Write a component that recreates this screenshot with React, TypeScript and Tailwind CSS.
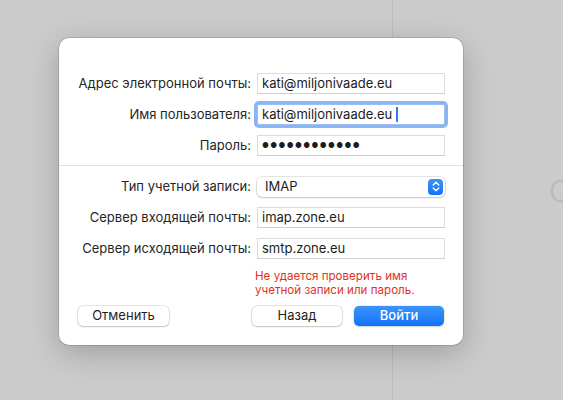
import React from "react";

const font = { fontFamily: "Inter, 'Noto Sans', Roboto, sans-serif" };

function Field({ label, value, focused = false, password = false }: { label: string; value: string; focused?: boolean; password?: boolean }) {
  return (
    <div className="flex h-[21px] items-center">
      <div className="w-[190px] shrink-0 text-right text-[13px] text-[#262626]">{label}</div>
      <div
        className={
          focused
            ? "ml-[6px] flex h-[21px] w-[188px] items-center rounded-[2px] border border-[#9cbff2] bg-white pl-[4px] ring-[3px] ring-[#8ab5f4]"
            : "ml-[6px] flex h-[21px] w-[188px] items-center border border-[#dcdcdc] border-b-[#cfcfcf] bg-white pl-[4px]"
        }
      >
        <span className={password ? "text-[7.5px] tracking-[1.4px] text-[#1c1c1c]" : "text-[13px] text-[#1c1c1c]"}>{value}</span>
        {focused && <span className="ml-[4px] h-[15px] w-[2px] bg-[#2f7cf6]" />}
      </div>
    </div>
  );
}

export default function App() {
  return (
    <div className="relative h-[400px] w-[563px] overflow-hidden bg-[#cbcbcb] pl-[59px] pt-[38px]" style={font}>
      <div className="absolute left-[392px] top-0 h-full w-px bg-[#bcbcbc]" />
      <div className="absolute left-[549px] top-[176px] text-[30px] font-light leading-none text-[#b9b9b9]">C</div>

      <div className="relative flex h-[307px] w-[404px] flex-col rounded-[10px] bg-white pt-[35px] shadow-[0_0_0_0.5px_rgba(0,0,0,0.25),0_8px_30px_rgba(0,0,0,0.22)]">
        <div className="flex flex-col gap-[10px] pl-[2px]">
          <Field label="Адрес электронной почты:" value="kati@miljonivaade.eu" />
          <Field label="Имя пользователя:" value="kati@miljonivaade.eu" focused />
          <Field label="Пароль:" value="●●●●●●●●●●●●" password />
        </div>

        <div className="mt-[9px] h-px w-full bg-[#e2e2e2]" />

        <div className="mt-[10px] flex flex-col gap-[10px] pl-[2px]">
          <div className="flex h-[21px] items-center">
            <div className="w-[190px] shrink-0 text-right text-[13px] text-[#262626]">Тип учетной записи:</div>
            <div className="ml-[6px] flex h-[20px] w-[188px] items-center justify-between rounded-[5px] bg-white pl-[8px] pr-[2px] shadow-[0_0_0_0.5px_rgba(0,0,0,0.2),0_1px_2px_rgba(0,0,0,0.15)]">
              <span className="text-[13px] text-[#1c1c1c]">IMAP</span>
              <span className="flex h-[16px] w-[15px] items-center justify-center rounded-[4px] bg-gradient-to-b from-[#3d93fb] to-[#1272f5]">
                <svg width="8" height="11" viewBox="0 0 8 11" fill="none">
                  <path d="M1.2 4 L4 1.3 L6.8 4" stroke="white" strokeWidth="1.4" strokeLinecap="round" strokeLinejoin="round" />
                  <path d="M1.2 7 L4 9.7 L6.8 7" stroke="white" strokeWidth="1.4" strokeLinecap="round" strokeLinejoin="round" />
                </svg>
              </span>
            </div>
          </div>
          <Field label="Сервер входящей почты:" value="imap.zone.eu" />
          <Field label="Сервер исходящей почты:" value="smtp.zone.eu" />
        </div>

        <div className="ml-[196px] mt-[10px] text-[11.6px] leading-[14px] text-[#e2321d]">
          Не удается проверить имя
          <br />
          учетной записи или пароль.
        </div>

        <div className="mt-[9px] flex items-center px-[19px]">
          <button className="h-[20px] w-[91px] rounded-[5px] bg-white text-[13px] text-[#1f1f1f] shadow-[0_0_0_0.5px_rgba(0,0,0,0.2),0_1px_2px_rgba(0,0,0,0.15)]">
            Отменить
          </button>
          <div className="flex-1" />
          <button className="h-[20px] w-[90px] rounded-[5px] bg-white text-[13px] text-[#1f1f1f] shadow-[0_0_0_0.5px_rgba(0,0,0,0.2),0_1px_2px_rgba(0,0,0,0.15)]">
            Назад
          </button>
          <button className="ml-[12px] h-[20px] w-[90px] rounded-[5px] bg-gradient-to-b from-[#3b93fc] to-[#0f73f5] text-[13px] font-medium text-white shadow-[0_0_0_0.5px_rgba(0,0,0,0.1),0_1px_2px_rgba(0,0,0,0.15)]">
            Войти
          </button>
        </div>
      </div>
    </div>
  );
}
